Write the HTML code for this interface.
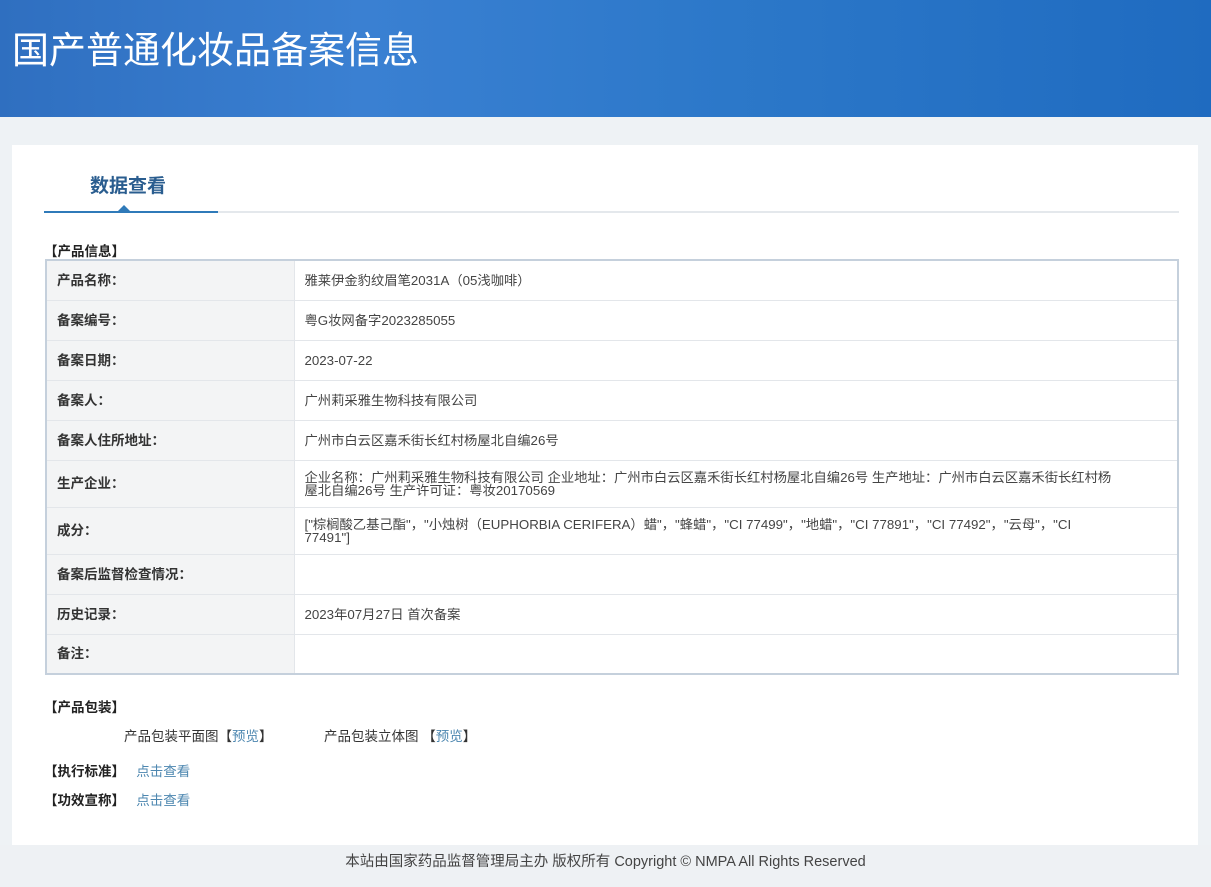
<!DOCTYPE html>
<html><head><meta charset="utf-8"><style>
*{margin:0;padding:0;box-sizing:border-box}
body{width:1211px;height:887px;overflow:hidden;background:#eef2f5;font-family:"Liberation Sans","Noto Sans CJK SC",sans-serif;color:#333;position:relative}
.hd{position:absolute;left:0;top:0;width:1211px;height:117px;background:linear-gradient(90deg,#2f6fc0 0%,#3a80d2 30%,#2c78c9 60%,#1f6bc0 100%)}
.hd h1{position:absolute;left:12px;top:20px;font-size:37px;font-weight:normal;color:#fff;font-family:"Noto Sans CJK SC",sans-serif}
.panel{position:absolute;left:12px;top:145px;width:1186px;height:700px;background:#fff}
.tab{position:absolute;left:78px;top:26px;font-size:19px;font-weight:bold;color:#2a5d8f;font-family:"Noto Sans CJK SC",sans-serif}
.line{position:absolute;left:32px;top:66px;width:1135px;height:2px;background:#e4e8ec}
.line2{position:absolute;left:32px;top:66px;width:174px;height:2px;background:#2f7ab9}
.tri{position:absolute;left:106px;top:60px;width:0;height:0;border-left:6px solid transparent;border-right:6px solid transparent;border-bottom:6px solid #2f7ab9}
.sec{position:absolute;font-size:13.5px;font-weight:bold;color:#222}
table{position:absolute;left:33px;top:114px;width:1134px;border-collapse:collapse;border:2px solid #c5d0dc;font-size:13.3px}
td{border-bottom:1px solid #e3e6ea;padding:0 10px;vertical-align:middle;line-height:13px}
td.l{width:248px;background:#f3f4f5;font-weight:bold;color:#333;border-right:1px solid #e3e6ea;font-size:13.5px}
td.v{color:#444}
.ft{position:absolute;left:0;top:845px;width:1211px;height:42px;background:#eef1f4;text-align:center;font-size:14.5px;line-height:34px;color:#444}
a{color:#4d87b0;text-decoration:none}
.t{position:absolute;font-size:13.5px;color:#333}
</style></head><body>
<div class="hd"><h1>国产普通化妆品备案信息</h1></div>
<div class="panel">
<div class="tab">数据查看</div>
<div class="line"></div><div class="line2"></div><div class="tri"></div>
<div class="sec" style="left:32px;top:95px">【产品信息】</div>
<table>
<tr style="height:40px"><td class="l">产品名称：</td><td class="v">雅莱伊金豹纹眉笔2031A（05浅咖啡）</td></tr>
<tr style="height:40px"><td class="l">备案编号：</td><td class="v">粤G妆网备字2023285055</td></tr>
<tr style="height:40px"><td class="l">备案日期：</td><td class="v">2023-07-22</td></tr>
<tr style="height:40px"><td class="l">备案人：</td><td class="v">广州莉采雅生物科技有限公司</td></tr>
<tr style="height:40px"><td class="l">备案人住所地址：</td><td class="v">广州市白云区嘉禾街长红村杨屋北自编26号</td></tr>
<tr style="height:47px"><td class="l">生产企业：</td><td class="v">企业名称：广州莉采雅生物科技有限公司 企业地址：广州市白云区嘉禾街长红村杨屋北自编26号 生产地址：广州市白云区嘉禾街长红村杨<br>屋北自编26号 生产许可证：粤妆20170569</td></tr>
<tr style="height:47px"><td class="l">成分：</td><td class="v">["棕榈酸乙基己酯"，"小烛树（EUPHORBIA CERIFERA）蜡"，"蜂蜡"，"CI 77499"，"地蜡"，"CI 77891"，"CI 77492"，"云母"，"CI<br>77491"]</td></tr>
<tr style="height:40px"><td class="l">备案后监督检查情况：</td><td class="v"></td></tr>
<tr style="height:40px"><td class="l">历史记录：</td><td class="v">2023年07月27日 首次备案</td></tr>
<tr style="height:40px"><td class="l">备注：</td><td class="v"></td></tr>
</table>
<div class="sec" style="left:32px;top:551px">【产品包装】</div>
<div class="t" style="left:112px;top:580px">产品包装平面图【<a>预览</a>】</div>
<div class="t" style="left:312px;top:580px">产品包装立体图 【<a>预览</a>】</div>
<div class="sec" style="left:32px;top:615px">【执行标准】&nbsp;&nbsp; <a style="font-weight:normal">点击查看</a></div>
<div class="sec" style="left:32px;top:644px">【功效宣称】&nbsp;&nbsp; <a style="font-weight:normal">点击查看</a></div>
</div>
<div class="ft">本站由国家药品监督管理局主办 版权所有 Copyright © NMPA All Rights Reserved</div>
</body></html>
